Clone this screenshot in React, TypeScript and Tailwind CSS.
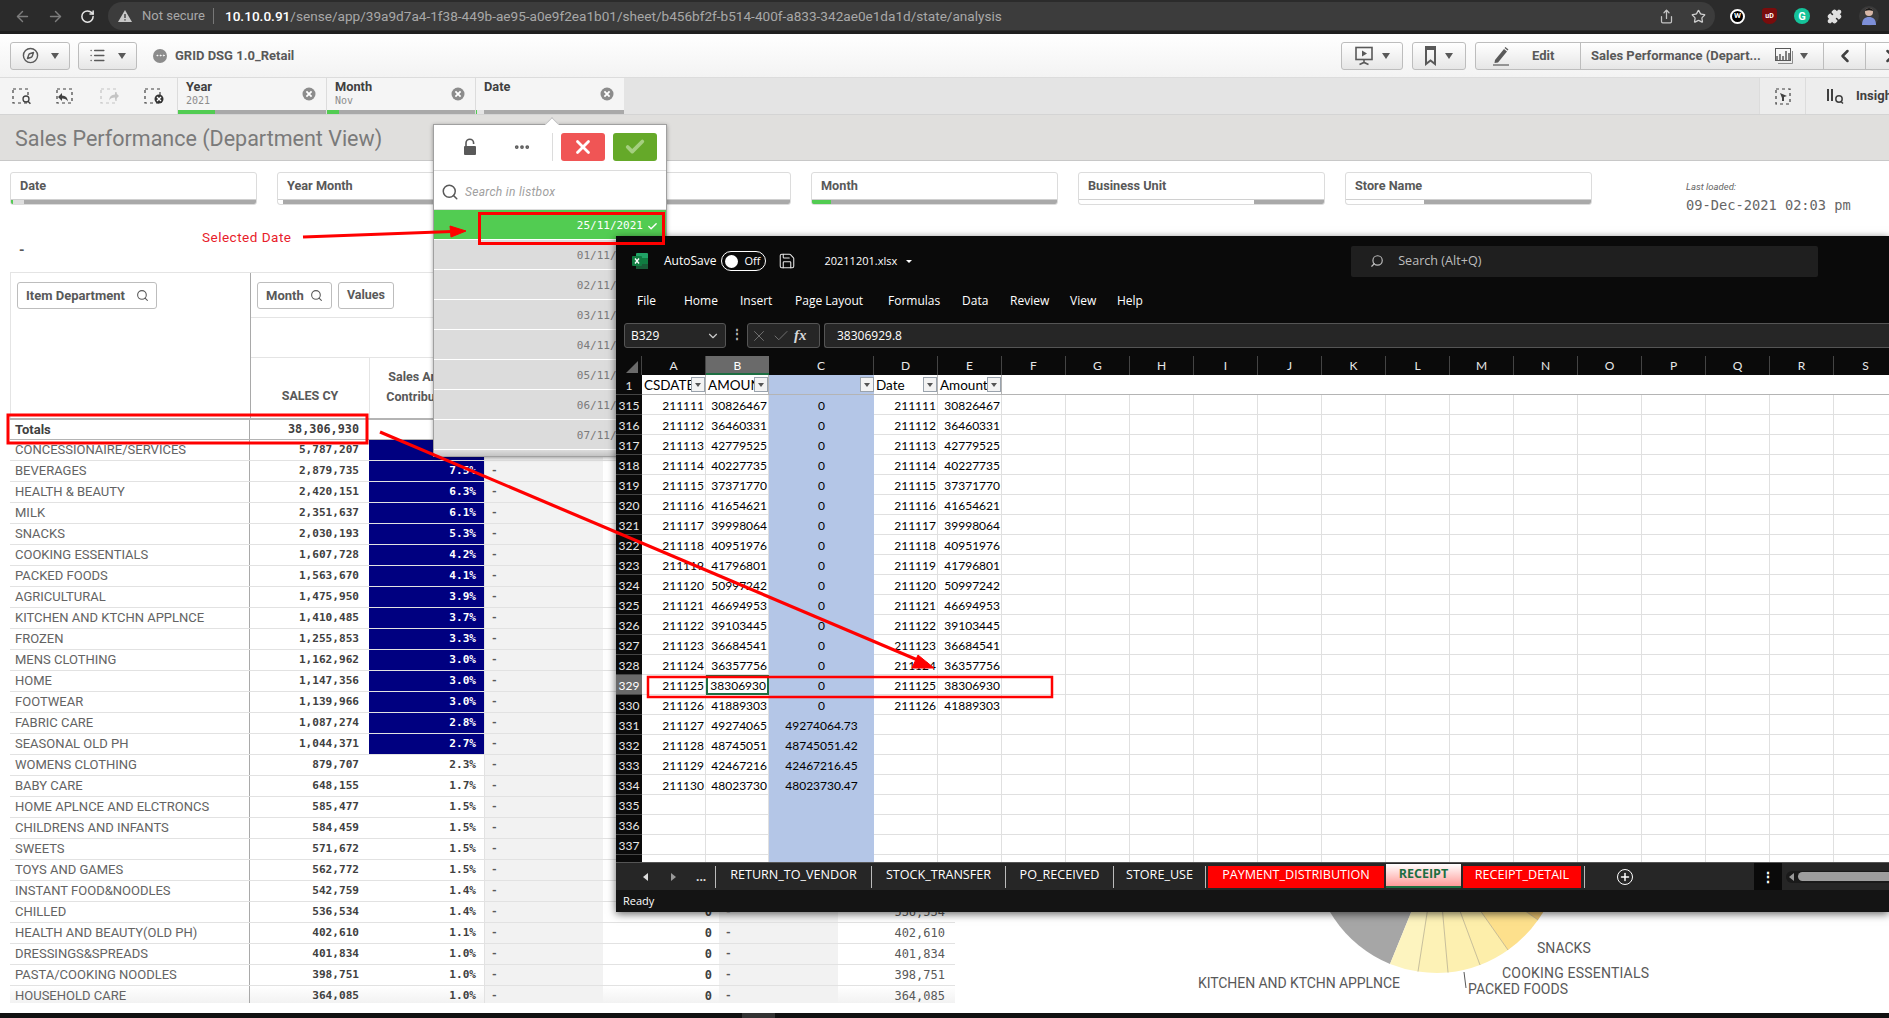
import React from "react";
import { ArrowLeft, ArrowRight, RotateCw, Share, Star, Puzzle, Compass, List, Search, ChevronLeft, ChevronRight, ChevronDown, Save, Plus, X, Check, MoreHorizontal } from "lucide-react";

const rows: [string, string, string][] = [
  ["CONCESSIONAIRE/SERVICES", "5,787,207", "15.1%"],
  ["BEVERAGES", "2,879,735", "7.5%"],
  ["HEALTH & BEAUTY", "2,420,151", "6.3%"],
  ["MILK", "2,351,637", "6.1%"],
  ["SNACKS", "2,030,193", "5.3%"],
  ["COOKING ESSENTIALS", "1,607,728", "4.2%"],
  ["PACKED FOODS", "1,563,670", "4.1%"],
  ["AGRICULTURAL", "1,475,950", "3.9%"],
  ["KITCHEN AND KTCHN APPLNCE", "1,410,485", "3.7%"],
  ["FROZEN", "1,255,853", "3.3%"],
  ["MENS CLOTHING", "1,162,962", "3.0%"],
  ["HOME", "1,147,356", "3.0%"],
  ["FOOTWEAR", "1,139,966", "3.0%"],
  ["FABRIC CARE", "1,087,274", "2.8%"],
  ["SEASONAL OLD PH", "1,044,371", "2.7%"],
  ["WOMENS CLOTHING", "879,707", "2.3%"],
  ["BABY CARE", "648,155", "1.7%"],
  ["HOME APLNCE AND ELCTRONCS", "585,477", "1.5%"],
  ["CHILDRENS AND INFANTS", "584,459", "1.5%"],
  ["SWEETS", "571,672", "1.5%"],
  ["TOYS AND GAMES", "562,772", "1.5%"],
  ["INSTANT FOOD&NOODLES", "542,759", "1.4%"],
  ["CHILLED", "536,534", "1.4%"],
  ["HEALTH AND BEAUTY(OLD PH)", "402,610", "1.1%"],
  ["DRESSINGS&SPREADS", "401,834", "1.0%"],
  ["PASTA/COOKING NOODLES", "398,751", "1.0%"],
  ["HOUSEHOLD CARE", "364,085", "1.0%"],
];

const sheet: [number, string, string, string, string][] = [
  [315, "211111", "30826467", "0", "y"], [316, "211112", "36460331", "0", "y"], [317, "211113", "42779525", "0", "y"],
  [318, "211114", "40227735", "0", "y"], [319, "211115", "37371770", "0", "y"], [320, "211116", "41654621", "0", "y"],
  [321, "211117", "39998064", "0", "y"], [322, "211118", "40951976", "0", "y"], [323, "211119", "41796801", "0", "y"],
  [324, "211120", "50997242", "0", "y"], [325, "211121", "46694953", "0", "y"], [326, "211122", "39103445", "0", "y"],
  [327, "211123", "36684541", "0", "y"], [328, "211124", "36357756", "0", "y"], [329, "211125", "38306930", "0", "y"],
  [330, "211126", "41889303", "0", "y"], [331, "211127", "49274065", "49274064.73", ""], [332, "211128", "48745051", "48745051.42", ""],
  [333, "211129", "42467216", "42467216.45", ""], [334, "211130", "48023730", "48023730.47", ""],
  [335, "", "", "", ""], [336, "", "", "", ""], [337, "", "", "", ""], [0, "", "", "", ""],
];

const extraCols = ["F", "G", "H", "I", "J", "K", "L", "M", "N", "O", "P", "Q", "R", "S"];

function Caret({ className = "" }: { className?: string }) {
  return <span className={"inline-block w-0 h-0 border-l-[4px] border-r-[4px] border-t-[6px] border-l-transparent border-r-transparent border-t-[#595959] " + className} />;
}

function ClearDot() {
  return (
    <svg width="14" height="14" viewBox="0 0 14 14" className="shrink-0">
      <circle cx="7" cy="7" r="6.5" fill="#8c8c8c" />
      <path d="M4.4 4.4l5.2 5.2M9.6 4.4l-5.2 5.2" stroke="#fff" strokeWidth="1.8" />
    </svg>
  );
}

function SelIcon({ kind, faded }: { kind: string; faded?: boolean }) {
  const c = faded ? "#c4c4c4" : "#404040";
  return (
    <svg width="21" height="17" viewBox="0 0 21 17" className="shrink-0">
      <rect x="1" y="1" width="15" height="14" fill="none" stroke={c} strokeWidth="1.2" strokeDasharray="3 3" />
      {kind === "search" && (<><circle cx="14" cy="11" r="3" fill="#f4f4f4" stroke={c} strokeWidth="1.3" /><path d="M16 13.2l2.4 2.6" stroke={c} strokeWidth="1.4" /></>)}
      {kind === "back" && <path d="M2 9l4-4v2.4c3.6 0 5.6 2 6 6-1.2-2-3-3-6-3V13z" fill={c} />}
      {kind === "fwd" && <path d="M19 8l-4-4v2.4c-3.6 0-5.6 2-6 6 1.2-2 3-3 6-3V12z" fill={c} />}
      {kind === "clear" && (<><circle cx="15" cy="11" r="4.5" fill="#333" /><path d="M13 9l4 4M17 9l-4 4" stroke="#fff" strokeWidth="1.3" /></>)}
    </svg>
  );
}

function SelTab({ label, value, green, gap }: { label: string; value: string; green: string; gap?: boolean }) {
  return (
    <div className="w-[149px] h-full flex flex-col bg-[#f5f5f5] border-l border-[#dcdcdc] shrink-0">
      <div className="flex-1 flex items-center justify-between pl-2 pr-[10px]">
        <div className="leading-none pt-[1px]">
          <div className="text-[12.8px] font-bold text-[#404040] mb-[3px] mt-[-1px]">{label}</div>
          <div className="text-[10px] text-[#8c8c8c] h-[11px] font-['DejaVu_Sans_Mono',monospace]">{value}</div>
        </div>
        <ClearDot />
      </div>
      <div className="h-1 flex bg-[#a9a9a9]">
        <div className={green} />
        {gap && <div className="w-[7px] bg-[#e4e4e4]" />}
      </div>
    </div>
  );
}

function Pane({ label, fill, whiteW }: { label: string; fill: string; whiteW: string }) {
  return (
    <div className="w-[247px] h-[33px] border border-[#dcdcdc] rounded-[3px] flex flex-col bg-white shrink-0 overflow-hidden">
      <div className="flex-1 flex items-center px-[9px] text-[12.7px] font-bold text-[#595959]">{label}</div>
      <div className="h-[5px] flex bg-[#a9a9a9] border-t border-[#d0d0d0]">
        <div className={fill} />
        <div className={whiteW} />
      </div>
    </div>
  );
}

function ToolBtn({ className, children }: { className: string; children: React.ReactNode }) {
  return (
    <div className={"h-[28px] rounded-[3px] border border-[#bdbdbd] bg-linear-to-b from-white to-[#e6e6e6] flex items-center justify-center shrink-0 " + className}>
      {children}
    </div>
  );
}

function FilterMark() {
  return (
    <span className="absolute right-0 top-[2px] w-[14px] h-[15px] border border-[#9aa3ad] bg-[#f3f3f3] flex items-center justify-center">
      <span className="w-0 h-0 border-l-[3.5px] border-r-[3.5px] border-t-[4px] border-l-transparent border-r-transparent border-t-[#555]" />
    </span>
  );
}

function ExcelTab({ w, label }: { w: string; label: string }) {
  return (
    <div className={"h-[22px] flex items-center justify-center border-r border-[#bbb] text-[12.6px] text-white shrink-0 pb-[2px] " + w}>{label}</div>
  );
}

export default function App() {
  return (
    <div className="relative w-[1889px] h-[1018px] overflow-hidden bg-white flex flex-col font-['Roboto',sans-serif]">
      {/* Browser bar */}
      <div className="h-[34px] bg-[#2b2b2b] border-b-[3px] border-[#1f1f1f] flex items-start shrink-0 pt-[2px] text-[13px] font-['Roboto',sans-serif]">
        <div className="w-[108px] h-[28px] flex items-center pl-[14px] gap-[16px] shrink-0">
          <ArrowLeft size={17} color="#7d7d7d" />
          <ArrowRight size={17} color="#7d7d7d" />
          <RotateCw size={15} color="#e8e8e8" strokeWidth={2.4} />
        </div>
        <div className="w-[1607px] h-[28px] rounded-full bg-[#3c3c3c] flex items-center shrink-0 pl-[9px] pr-[9px]">
          <svg width="16" height="14" viewBox="0 0 16 14"><path d="M8 1l7 12H1z" fill="#c8c8c8" /><path d="M8 5v4M8 10.2v1.4" stroke="#3c3c3c" strokeWidth="1.4" /></svg>
          <span className="ml-[9px] text-[#a8a8a8]">Not secure</span>
          <span className="ml-[8px] mr-[11px] w-px h-[16px] bg-[#777]" />
          <span className="text-white font-medium text-[13.6px]">10.10.0.91</span>
          <span className="text-[#a8a8a8] text-[13.6px]">/sense/app/39a9d7a4-1f38-449b-ae95-a0e9f2ea1b01/sheet/b456bf2f-b514-400f-a833-342ae0e1da1d/state/analysis</span>
          <span className="ml-auto flex items-center gap-[17px]">
            <Share size={15} color="#c4c4c4" />
            <Star size={15} color="#d0d0d0" />
          </span>
        </div>
        <div className="flex-1 h-[28px] flex items-center pl-[15px] gap-[17px]">
          <span className="w-[15px] h-[15px] rounded-full bg-black border-2 border-white text-white text-[8px] leading-none flex items-center justify-center font-bold">W</span>
          <span className="w-[15px] h-[16px] rounded-b-[7px] rounded-t-[3px] bg-[#7a0c0c] text-white text-[7px] leading-none flex items-center justify-center font-bold">uD</span>
          <span className="w-[16px] h-[16px] rounded-full bg-[#15c39a] text-white text-[11px] leading-none flex items-center justify-center font-bold">G</span>
          <Puzzle size={15} color="#e0e0e0" fill="#e0e0e0" />
          <svg width="20" height="22" viewBox="0 0 20 22"><circle cx="10" cy="11" r="10" fill="#3a3a3a" /><circle cx="10" cy="7" r="4" fill="#d8b8a8" /><path d="M3 20c0-6 3-8 7-8s7 2 7 8z" fill="#7d8fd8" /><path d="M6 6c0-4 8-4 8 0-3-1-5-1-8 0z" fill="#1a1a1a" /></svg>
        </div>
      </div>

      {/* Qlik toolbar */}
      <div className="h-[44px] shrink-0 flex items-center bg-linear-to-b from-white to-[#f3f3f3] border-b border-[#dcdcdc]">
        <div className="w-[1341px] shrink-0 flex items-center pl-[10px]">
          <ToolBtn className="w-[60px] gap-[12px]"><Compass size={17} color="#595959" /><Caret /></ToolBtn>
          <ToolBtn className="w-[59px] ml-[8px] gap-[12px]"><List size={17} color="#595959" /><Caret /></ToolBtn>
          <span className="ml-[16px] w-[14px] h-[14px] rounded-full bg-[#8c8c8c] flex items-center justify-center shrink-0"><MoreHorizontal size={11} color="#fff" /></span>
          <span className="ml-[8px] text-[13px] font-bold text-[#595959] font-['Roboto',sans-serif]">GRID DSG 1.0_Retail</span>
        </div>
        <ToolBtn className="w-[62px] gap-[9px]">
          <svg width="18" height="20" viewBox="0 0 18 20"><rect x="1" y="1.5" width="16" height="12" fill="none" stroke="#595959" strokeWidth="1.6" /><path d="M7 4.5l5 3-5 3z" fill="#595959" /><path d="M9 14v3M4.5 18.5L9 16.5l4.5 2" stroke="#595959" strokeWidth="1.6" fill="none" /></svg>
          <Caret />
        </ToolBtn>
        <ToolBtn className="w-[54px] ml-[9px] gap-[9px]">
          <svg width="11" height="20" viewBox="0 0 11 20"><path d="M1 1h9v17l-4.5-3.5L1 18z" fill="none" stroke="#595959" strokeWidth="2" /><rect x="1" y="1" width="9" height="3" fill="#595959" /></svg>
          <Caret />
        </ToolBtn>
        <ToolBtn className="w-[500px] ml-[9px] !justify-start">
          <div className="w-[105px] h-full flex items-center border-r border-[#bdbdbd] shrink-0 pl-[16px]">
            <svg width="18" height="20" viewBox="0 0 18 20"><path d="M3 14L12 3l3 2.5L6 16.5 2.5 17z" fill="#595959" /><path d="M13 1.5l3 2.5" stroke="#595959" strokeWidth="1.4" /><path d="M1 19h16" stroke="#595959" strokeWidth="1.2" /></svg>
            <span className="ml-[22px] text-[13px] font-bold text-[#595959]">Edit</span>
          </div>
          <div className="w-[243px] h-full flex items-center border-r border-[#bdbdbd] shrink-0 pl-[10px]">
            <span className="text-[13px] font-bold text-[#595959] whitespace-nowrap">Sales Performance (Depart...</span>
            <svg width="18" height="16" viewBox="0 0 18 16" className="ml-[14px] shrink-0"><rect x="0.5" y="0.5" width="15" height="12" fill="none" stroke="#595959" /><path d="M2 12V8M5 12V6M8 12V8M11 12V3M14 12V5" stroke="#595959" strokeWidth="1.5" /><path d="M17.5 3v12.5H3" fill="none" stroke="#8c8c8c" /></svg>
            <Caret className="ml-[7px]" />
          </div>
          <div className="w-[42px] h-full flex items-center justify-center border-r border-[#bdbdbd] shrink-0"><ChevronLeft size={20} color="#404040" strokeWidth={3} /></div>
          <div className="w-[43px] h-full flex items-center pl-[14px] shrink-0"><ChevronRight size={20} color="#404040" strokeWidth={3} /></div>
        </ToolBtn>
      </div>

      {/* Selections bar */}
      <div className="h-[37px] shrink-0 flex bg-[#e4e4e4] border-b border-[#d4d4d4]">
        <div className="w-[177px] shrink-0 flex items-center pl-[12px] gap-[23px] bg-[#f4f4f4]">
          <SelIcon kind="search" />
          <SelIcon kind="back" />
          <SelIcon kind="fwd" faded />
          <SelIcon kind="clear" />
        </div>
        <SelTab label="Year" value="2021" green="w-[37px] bg-[#52cc52]" />
        <SelTab label="Month" value="Nov" green="w-[12px] bg-[#52cc52]" />
        <SelTab label="Date" value="" green="w-px bg-[#52cc52]" gap />
        <div className="ml-auto w-[130px] shrink-0 flex overflow-hidden">
          <div className="w-[47px] flex items-center justify-center border-l border-r border-[#dcdcdc] bg-[#ededed] shrink-0">
            <svg width="16" height="17" viewBox="0 0 16 17"><rect x="1" y="1" width="14" height="15" fill="none" stroke="#404040" strokeWidth="1.2" strokeDasharray="3 3" /><path d="M5 5l7 3-3 1v4l-2 0v-3z" fill="#404040" /></svg>
          </div>
          <div className="pl-[20px] flex items-center gap-[10px] whitespace-nowrap shrink-0 bg-[#ededed]">
            <svg width="20" height="16" viewBox="0 0 20 16"><path d="M2 1v12M6 1v12" stroke="#404040" strokeWidth="2" /><circle cx="13" cy="11" r="3.2" fill="none" stroke="#404040" strokeWidth="1.5" /><path d="M15 13.5l2 2" stroke="#404040" strokeWidth="1.5" /></svg>
            <span className="text-[13px] font-bold text-[#404040]">Insights</span>
          </div>
        </div>
      </div>

      {/* Title */}
      <div className="h-[46px] shrink-0 bg-[#e0dfdd] border-b border-[#c8c8c8] flex items-center pl-[15px] pt-[3px] text-[21.5px] text-[#7a7a7a]">
        Sales Performance (Department View)
      </div>

      {/* Filter panes */}
      <div className="h-[33px] mt-[11px] shrink-0 flex pl-[10px] gap-[20px]">
        <Pane label="Date" fill="w-[2px] bg-[#52cc52]" whiteW="w-[11px] bg-[#dedede]" />
        <Pane label="Year Month" fill="w-[5px] bg-white" whiteW="" />
        <Pane label="Week" fill="w-[5px] bg-white" whiteW="" />
        <Pane label="Month" fill="w-[19px] bg-[#52cc52]" whiteW="" />
        <Pane label="Business Unit" fill="w-[175px] bg-white" whiteW="" />
        <Pane label="Store Name" fill="w-[78px] bg-white" whiteW="" />
        <div className="ml-[74px] mt-[10px] text-[#666]">
          <div className="text-[9.5px] italic leading-none">Last loaded:</div>
          <div className="text-[13.7px] leading-none mt-[7px] font-['DejaVu_Sans_Mono',monospace] whitespace-nowrap">09-Dec-2021 02:03 pm</div>
        </div>
      </div>

      {/* KPI dash */}
      <div className="h-[67px] shrink-0 pl-[19px] pt-[38px] text-[14px] font-bold text-[#595959] leading-none">-</div>

      {/* Table + chart */}
      <div className="h-[731px] shrink-0 flex overflow-hidden">
        <div className="ml-[10px] w-[945px] shrink-0 flex flex-col">
          <div className="h-[146px] flex shrink-0 border-t border-[#e4e4e4]">
            <div className="w-[240px] shrink-0 pl-[6px] pt-[9px] border-l border-[#e4e4e4]">
              <div className="w-[140px] h-[27px] border border-[#bdbdbd] rounded-[3px] flex items-center justify-between pl-[8px] pr-[7px] text-[13px] font-bold text-[#595959]">
                Item Department <Search size={13} color="#595959" />
              </div>
            </div>
            <div className="flex-1 border-l border-[#a9a9a9] flex flex-col">
              <div className="h-[45px] flex items-start gap-[6px] pt-[9px] pl-[6px] border-b border-[#e4e4e4]">
                <div className="w-[75px] h-[27px] border border-[#bdbdbd] rounded-[3px] flex items-center justify-between px-[8px] text-[13px] font-bold text-[#595959]">
                  Month <Search size={13} color="#595959" />
                </div>
                <div className="w-[56px] h-[27px] border border-[#bdbdbd] rounded-[3px] flex items-center justify-center text-[12.5px] font-bold text-[#595959]">Values</div>
              </div>
              <div className="h-[40px] border-b border-[#e4e4e4]" />
              <div className="flex-1 flex text-[12.5px] font-bold text-[#595959]">
                <div className="w-[119px] flex items-end justify-center pb-[12px] border-r border-[#e4e4e4]">SALES CY</div>
                <div className="w-[116px] flex flex-col items-center justify-end pb-[11px] leading-[20px] border-r border-[#e4e4e4]"><span>Sales Amount</span><span>Contribution %</span></div>
              </div>
            </div>
          </div>
          {/* Totals */}
          <div className="h-[22px] flex shrink-0 items-center border-t-2 border-b border-[#b4b4b4] text-[13px] font-bold text-[#404040]">
            <div className="w-[240px] pl-[5px] border-r border-[#a9a9a9] h-full flex items-center">Totals</div>
            <div className="w-[119px] pr-[10px] text-right h-full flex items-center justify-end font-['DejaVu_Sans_Mono',monospace] text-[11.8px]">38,306,930</div>
          </div>
          {rows.map((r, i) => (
            <div key={r[0]} className={"h-[21px] flex shrink-0 border-b border-[#e2e2e2] text-[12px] leading-none " + (i === 26 ? "bg-linear-to-b from-white to-[#f0f0f0]" : "")}>
              <div className="w-[240px] shrink-0 pl-[5px] pb-[2px] border-r border-[#a9a9a9] text-[#636363] text-[13px] flex items-center whitespace-nowrap">{r[0]}</div>
              <div className="w-[119px] shrink-0 pr-[10px] flex items-center justify-end font-bold text-[#404040] font-['DejaVu_Sans_Mono',monospace] text-[11.1px]">{r[1]}</div>
              <div className={"w-[116px] shrink-0 pr-[8px] flex items-center justify-end font-bold font-['DejaVu_Sans_Mono',monospace] text-[11.1px] border-r border-[#e2e2e2] " + (i < 15 ? "bg-[#000080] text-white" : "text-[#404040]")}>{r[2]}</div>
              <div className="w-[118px] shrink-0 pl-[7px] flex items-center bg-[#f2f2f2] font-bold text-[#595959]">-</div>
              <div className="w-[116px] shrink-0 pr-[7px] flex items-center justify-end font-bold text-[#404040] font-['DejaVu_Sans_Mono',monospace]">{i >= 22 ? "0" : ""}</div>
              <div className="w-[119px] shrink-0 pl-[7px] flex items-center bg-[#f2f2f2] font-bold text-[#595959]">{i >= 22 ? "-" : ""}</div>
              <div className="w-[117px] shrink-0 pr-[10px] flex items-center justify-end text-[#595959] font-['DejaVu_Sans_Mono',monospace]">{i >= 22 ? r[1] : ""}</div>
            </div>
          ))}
        </div>
        <div className="flex-1 flex flex-col justify-end">
          <svg width="934" height="98" viewBox="955 905 934 98" className="shrink-0">
            <path d="M1437 849L1313 849A124 124 0 0 0 1390 964Z" fill="#a6a6a6" />
            <path d="M1437 849L1390 964A124 124 0 0 0 1418 971.5Z" fill="#fdf4bf" />
            <path d="M1437 849L1418 971.5A124 124 0 0 0 1448 972.5Z" fill="#fdf2b6" />
            <path d="M1437 849L1448 972.5A124 124 0 0 0 1480 965Z" fill="#fdf0b0" />
            <path d="M1437 849L1480 965A124 124 0 0 0 1508 950Z" fill="#fdeeaa" />
            <path d="M1437 849L1508 950A124 124 0 0 0 1538 920Z" fill="#fde08c" />
            <path d="M1437 849L1538 920A124 124 0 0 0 1561 849Z" fill="#e8c270" />
            <path d="M1437 849L1418 971.5M1437 849L1448 972.5M1437 849L1480 965M1437 849L1508 950M1437 849L1538 920" stroke="#b0a888" strokeWidth="0.7" fill="none" />
            <path d="M1464 972l2 16" stroke="#595959" strokeWidth="1" />
            <g fontSize="14" fill="#595959" fontFamily="Roboto, sans-serif">
              <text x="1198" y="988" textLength="202">KITCHEN AND KTCHN APPLNCE</text>
              <text x="1537" y="953">SNACKS</text>
              <text x="1502" y="978" textLength="147">COOKING ESSENTIALS</text>
              <text x="1468" y="994">PACKED FOODS</text>
            </g>
          </svg>
        </div>
      </div>

      <div className="flex-1" />
      <div className="h-[5px] shrink-0 bg-[#111] flex"><div className="ml-[742px] w-[33px] bg-[#333]" /></div>

      {/* Listbox popover */}
      <div className="absolute left-[433px] top-[124px] w-[234px] h-[333px] bg-white border border-[#a0a0a0] shadow-[0_1px_4px_rgba(0,0,0,0.35)] flex flex-col">
        <div className="absolute top-[-6px] left-[113px] w-[10px] h-[10px] rotate-45 bg-white border-l border-t border-[#c0c0c0]" />
        <div className="h-[46px] border-b border-[#dcdcdc] flex items-center shrink-0 pb-[1px]">
          <svg width="14" height="18" viewBox="0 0 14 18" className="ml-[29px] shrink-0"><path d="M3 8V5a3.8 3.8 0 0 1 7.6 0v1" fill="none" stroke="#595959" strokeWidth="1.6" /><rect x="1" y="8" width="12" height="9" rx="1" fill="#595959" /></svg>
          <MoreHorizontal size={18} color="#595959" className="ml-[36px]" strokeWidth={3} />
          <span className="ml-[21px] w-px h-[28px] bg-[#dcdcdc]" />
          <span className="ml-[8px] w-[44px] h-[28px] rounded-[3px] bg-[#f05555] flex items-center justify-center"><X size={22} color="#fff" strokeWidth={3} /></span>
          <span className="ml-[8px] w-[44px] h-[28px] rounded-[3px] bg-[#65a929] flex items-center justify-center"><Check size={22} color="#a5cf80" strokeWidth={4} /></span>
        </div>
        <div className="h-[39px] flex items-center pl-[7px] pt-[3px] shrink-0 border-b border-[#dcdcdc]">
          <Search size={18} color="#595959" />
          <span className="ml-[6px] text-[12px] italic text-[#a0a0a0] tracking-[0.3px]">Search in listbox</span>
        </div>
        <div className="h-[30px] shrink-0 flex items-center justify-end bg-[#52cc52] border-b border-white pr-[8px] pt-[4px] text-[11px] text-white font-['DejaVu_Sans_Mono',monospace]">
          25/11/2021<Check size={11} color="#fff" strokeWidth={3} className="ml-[4px]" />
        </div>
        {["01/11/2021", "02/11/2021", "03/11/2021", "04/11/2021", "05/11/2021", "06/11/2021", "07/11/2021"].map((d) => (
          <div key={d} className="h-[30px] shrink-0 flex items-center justify-end bg-[#dcdcdc] border-b border-white pr-[23px] pt-[4px] text-[11px] text-[#7a7a7a] font-['DejaVu_Sans_Mono',monospace]">{d}</div>
        ))}
        <div className="flex-1 bg-linear-to-b from-[#dcdcdc] to-[#c4c4c4]" />
      </div>

      {/* Excel window */}
      <div className="absolute left-[616px] top-[236px] w-[1273px] h-[676px] bg-[#0a0a0a] shadow-[0_2px_8px_rgba(0,0,0,0.6)] flex flex-col font-['Open_Sans',sans-serif] text-white text-[12px]">
        <div className="h-[50px] shrink-0 flex items-center pl-[16px]">
          <svg width="16" height="16" viewBox="0 0 16 16" className="shrink-0">
            <rect x="4" y="0" width="12" height="16" rx="1" fill="#21a366" />
            <rect x="10" y="5" width="6" height="6" fill="#107c41" />
            <rect x="4" y="11" width="12" height="5" fill="#185c37" />
            <rect x="0" y="3" width="10" height="10" rx="1" fill="#107c41" />
            <path d="M3 5.5l4 5M7 5.5l-4 5" stroke="#fff" strokeWidth="1.3" />
          </svg>
          <span className="ml-[16px]">AutoSave</span>
          <span className="ml-[5px] w-[45px] h-[20px] rounded-full border border-white flex items-center pl-[3px]">
            <span className="w-[13px] h-[13px] rounded-full bg-white" />
            <span className="ml-[6px] text-[11px]">Off</span>
          </span>
          <Save size={18} color="#e8e8e8" strokeWidth={1.4} className="ml-[12px]" />
          <span className="ml-[28px] text-[11px]">20211201.xlsx</span>
          <span className="ml-[9px] w-0 h-0 border-l-[3px] border-r-[3px] border-t-[3px] border-l-transparent border-r-transparent border-t-white" />
          <div className="ml-[439px] w-[467px] h-[31px] rounded-[2px] bg-[#1f1f1f] flex items-center pl-[19px] text-[#bdbdbd]">
            <Search size={14} color="#bdbdbd" className="-scale-x-100" />
            <span className="ml-[14px] text-[12.6px]">Search (Alt+Q)</span>
          </div>
        </div>
        <div className="h-[30px] shrink-0 flex items-center pl-[21px] text-[12px] whitespace-nowrap">
          <span className="w-[47px]">File</span>
          <span className="w-[56px]">Home</span>
          <span className="w-[55px]">Insert</span>
          <span className="w-[93px]">Page Layout</span>
          <span className="w-[74px]">Formulas</span>
          <span className="w-[48px]">Data</span>
          <span className="w-[60px]">Review</span>
          <span className="w-[47px]">View</span>
          <span>Help</span>
        </div>
        <div className="h-[40px] shrink-0 flex items-start pl-[8px] pt-[7px] text-[12px]">
          <div className="w-[102px] h-[25px] rounded-[3px] bg-[#262626] border border-[#555] flex items-center pl-[6px] pr-[5px] pt-[1px] justify-between shrink-0">
            B329 <ChevronDown size={14} color="#ccc" />
          </div>
          <span className="w-[21px] text-center text-[#bbb] leading-[22px] font-bold shrink-0">⋮</span>
          <div className="w-[73px] h-[25px] rounded-[3px] bg-[#262626] border border-[#555] flex items-center pl-[2px] gap-[4px] shrink-0">
            <X size={18} color="#777" strokeWidth={1.2} />
            <Check size={18} color="#777" strokeWidth={1.2} />
            <span className="font-['Liberation_Serif',serif] italic font-bold text-[15px] text-[#d8d8d8]">fx</span>
          </div>
          <div className="ml-[4px] flex-1 h-[25px] rounded-l-[3px] bg-[#262626] border border-[#555] border-r-0 flex items-center pl-[12px] pt-[1px]">38306929.8</div>
        </div>
        {/* column headers */}
        <div className="h-[19px] shrink-0 flex text-[12px] text-[#e8e8e8] font-['Lato',sans-serif] leading-[20px]">
          <div className="w-[26px] shrink-0 border-r border-[#444] flex items-end justify-end pr-[3px] pb-[2px]">
            <svg width="12" height="12" viewBox="0 0 12 12"><path d="M12 0v12H0z" fill="#6a6a6a" /></svg>
          </div>
          <div className="w-[64px] shrink-0 text-center border-r border-[#444]">A</div>
          <div className="w-[63px] shrink-0 text-center bg-[#6a6a6a] border-b-2 border-[#1d6f42] text-white">B</div>
          <div className="w-[105px] shrink-0 text-center border-r border-[#444]">C</div>
          <div className="w-[64px] shrink-0 text-center border-r border-[#444]">D</div>
          <div className="w-[64px] shrink-0 text-center border-r border-[#444]">E</div>
          {extraCols.map((c) => (
            <div key={c} className="w-[64px] shrink-0 text-center border-r border-[#444]">{c}</div>
          ))}
        </div>
        {/* sheet */}
        <div className="flex-1 bg-white overflow-hidden text-black text-[12px] font-['Lato',sans-serif] leading-none">
          <div className="h-[20px] flex">
            <div className="w-[26px] shrink-0 bg-[#0a0a0a] text-[#e8e8e8] border-b border-[#444] flex items-center justify-center pt-[2px]">1</div>
            <div className="relative w-[64px] shrink-0 border-r border-b border-[#b4b4b4] flex items-center pl-[2px] pt-[2px] overflow-hidden whitespace-nowrap text-[13.5px]">CSDATE<FilterMark /></div>
            <div className="relative w-[63px] shrink-0 border-r border-b border-[#b4b4b4] flex items-center pl-[2px] pt-[2px] overflow-hidden whitespace-nowrap text-[13.5px]">AMOUNT<FilterMark /></div>
            <div className="relative w-[105px] shrink-0 bg-[#b4c6e7] border-b border-[#b4b4b4]"><FilterMark /></div>
            <div className="relative w-[64px] shrink-0 border-r border-b border-[#b4b4b4] flex items-center pl-[2px] pt-[2px] text-[13.5px]">Date<FilterMark /></div>
            <div className="relative w-[64px] shrink-0 border-r border-b border-[#b4b4b4] flex items-center pl-[2px] pt-[2px] overflow-hidden whitespace-nowrap text-[13.5px]">Amount<FilterMark /></div>
            <div className="flex-1 border-b border-[#b4b4b4]" />
          </div>
          {sheet.map((r, i) => {
            const sel = r[0] === 329;
            const has = r[4] === "y";
            return (
              <div key={i} className="h-[20px] flex">
                <div className={"w-[26px] shrink-0 border-b border-[#444] flex items-center justify-center pt-[2px] " + (sel ? "bg-[#6a6a6a] text-white" : "bg-[#0a0a0a] text-[#e8e8e8]")}>{r[0] || ""}</div>
                <div className="w-[64px] shrink-0 border-r border-b border-[#e0e0e0] flex items-center justify-end pr-[1px] pt-[2px]">{r[1]}</div>
                <div className={"w-[63px] shrink-0 flex items-center justify-end pr-[1px] pt-[2px] " + (sel ? "border-2 border-[#1d6f42]" : "border-r border-b border-[#e0e0e0]")}>{r[2]}</div>
                <div className="w-[105px] shrink-0 bg-[#b4c6e7] flex items-center justify-center pt-[2px]">{r[3]}</div>
                <div className="w-[64px] shrink-0 border-r border-b border-[#e0e0e0] flex items-center justify-end pr-[1px] pt-[2px]">{has ? r[1] : ""}</div>
                <div className="w-[64px] shrink-0 border-r border-b border-[#e0e0e0] flex items-center justify-end pr-[1px] pt-[2px]">{has ? r[2] : ""}</div>
                {extraCols.map((c) => (
                  <div key={c} className="w-[64px] shrink-0 border-r border-b border-[#e0e0e0]" />
                ))}
              </div>
            );
          })}
        </div>
        {/* tabs */}
        <div className="h-[28px] shrink-0 bg-[#262626] border-t border-[#555] flex items-center">
          <div className="w-[100px] shrink-0 flex items-center pl-[27px] text-[#ddd] h-[22px] border-r border-[#bbb]">
            <span className="w-0 h-0 border-t-[4px] border-b-[4px] border-r-[5px] border-t-transparent border-b-transparent border-r-[#ddd]" />
            <span className="ml-[23px] w-0 h-0 border-t-[4px] border-b-[4px] border-l-[5px] border-t-transparent border-b-transparent border-l-[#999]" />
            <span className="ml-[20px] font-bold leading-none">...</span>
          </div>
          <ExcelTab w="w-[156px]" label="RETURN_TO_VENDOR" />
          <ExcelTab w="w-[134px]" label="STOCK_TRANSFER" />
          <ExcelTab w="w-[108px]" label="PO_RECEIVED" />
          <ExcelTab w="w-[92px]" label="STORE_USE" />
          <div className="ml-[2px] w-[176px] h-[22px] bg-[#ff0000] flex items-center justify-center text-white text-[12.6px] pb-[2px] shrink-0">PAYMENT_DISTRIBUTION</div>
          <div className="ml-[2px] w-[75px] h-[24px] mt-[-1px] bg-linear-to-b from-white to-[#ff9a9a] border-b-2 border-[#1d6f42] flex items-center justify-center text-[#1d6f42] text-[12.5px] pb-[2px] font-bold shrink-0">RECEIPT</div>
          <div className="ml-[2px] w-[118px] h-[22px] bg-[#ff0000] flex items-center justify-center text-white text-[12.6px] pb-[2px] shrink-0">RECEIPT_DETAIL</div>
          <span className="ml-[3px] w-px h-[22px] bg-[#bbb] shrink-0" />
          <span className="ml-[32px] w-[16px] h-[16px] rounded-full border border-white flex items-center justify-center shrink-0"><Plus size={12} color="#fff" strokeWidth={3} /></span>
          <div className="ml-[121px] w-[28px] h-full bg-[#0a0a0a] flex items-center justify-center font-bold text-[14px] shrink-0">⋮</div>
          <div className="ml-[4px] w-[107px] shrink-0 flex items-center h-[12px] rounded-l-full bg-[#1a1a1a] pl-[3px]">
            <span className="w-0 h-0 border-t-[4px] border-b-[4px] border-r-[5px] border-t-transparent border-b-transparent border-r-[#999]" />
            <span className="ml-[4px] flex-1 h-[9px] rounded-l-full bg-[#9e9e9e]" />
          </div>
        </div>
        <div className="h-[22px] shrink-0 bg-[#141414] flex items-center pl-[7px] text-[11px]">Ready</div>
      </div>

      {/* Annotations */}
      <span className="absolute left-[202px] top-[228px] text-[13.5px] leading-[18px] text-[#e8202a] tracking-[0.5px] whitespace-nowrap">Selected Date</span>
      <svg className="absolute left-0 top-0 pointer-events-none" width="1889" height="1018" viewBox="0 0 1889 1018">
        <path d="M303 237L452 231.5" stroke="#ff0000" strokeWidth="3" />
        <path d="M466 231L450 226L451 237Z" fill="#ff0000" stroke="#ff0000" />
        <path d="M380 432L920 661" stroke="#ff0000" strokeWidth="3.2" />
        <path d="M934 668L918 655L912 668Z" fill="#ff0000" stroke="#ff0000" />
        <rect x="8" y="415" width="359" height="28" fill="none" stroke="#ff0000" strokeWidth="3" />
        <rect x="479.5" y="213.5" width="184" height="30" fill="none" stroke="#ff0000" strokeWidth="3" />
        <rect x="648" y="677" width="404" height="20" fill="none" stroke="#ff0000" strokeWidth="2.5" />
      </svg>
    </div>
  );
}
